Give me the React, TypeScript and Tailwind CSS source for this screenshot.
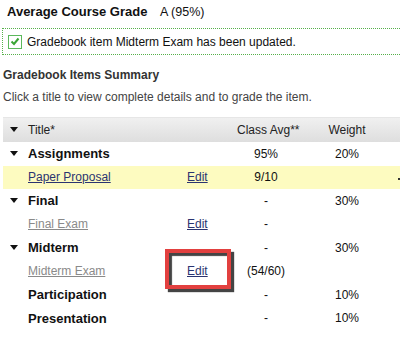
import React from "react";

type Row = {
  kind: "group" | "item";
  title: string;
  avg?: string;
  weight?: string;
  toggle?: boolean;
  edit?: boolean;
  muted?: boolean;
  highlight?: boolean;
  boxed?: boolean;
};

const rows: Row[] = [
  { kind: "group", title: "Assignments", avg: "95%", weight: "20%", toggle: true },
  { kind: "item", title: "Paper Proposal", avg: "9/10", edit: true, highlight: true },
  { kind: "group", title: "Final", avg: "-", weight: "30%", toggle: true },
  { kind: "item", title: "Final Exam", avg: "-", edit: true, muted: true },
  { kind: "group", title: "Midterm", avg: "-", weight: "30%", toggle: true },
  { kind: "item", title: "Midterm Exam", avg: "(54/60)", edit: true, muted: true, boxed: true },
  { kind: "group", title: "Participation", avg: "-", weight: "10%" },
  { kind: "group", title: "Presentation", avg: "-", weight: "10%" },
];

function Caret() {
  return (
    <svg width="8" height="6" viewBox="0 0 8 6" className="ml-[7px]">
      <path d="M0 0 L8 0 L4 5 Z" fill="#111" />
    </svg>
  );
}

function App(): JSX.Element {
  return (
    <div className="w-[400px] h-[341px] overflow-hidden bg-white text-[12px] text-[#111] font-['Liberation_Sans',Arial,sans-serif]">
      <div className="h-[24px] flex items-center pl-[7px]">
        <span className="font-bold text-[13px] w-[153px]">Average Course Grade</span>
        <span className="text-[12.5px]">A (95%)</span>
      </div>

      <div className="mt-[4px] ml-[2px] w-[420px] h-[27px] flex items-center border border-dotted border-[#56b04a] bg-white">
        <span className="ml-[5px] w-[14px] h-[14px] border border-[#5cb85c] bg-white flex items-center justify-center">
          <svg width="10" height="9" viewBox="0 0 10 9">
            <path d="M1.5 4.5 L4 7 L8.5 1.5" stroke="#3aa535" strokeWidth="2" fill="none" />
          </svg>
        </span>
        <span className="ml-[5px]">Gradebook item Midterm Exam has been updated.</span>
      </div>

      <div className="mt-[10px] h-[20px] flex items-center pl-[3px] font-bold text-[#333]">
        Gradebook Items Summary
      </div>
      <div className="mt-[2px] h-[20px] flex items-center pl-[3px] text-[#444]">
        Click a title to view complete details and to grade the item.
      </div>

      <div className="mt-[10px] ml-[3px]">
        <div className="h-[25px] flex items-center bg-gradient-to-b from-[#f0f0f0] to-[#dedede] border-t border-[#e6e6e6] text-[#222]">
          <div className="w-[25px]">
            <Caret />
          </div>
          <div className="w-[159px]">Title*</div>
          <div className="w-[50px]"></div>
          <div className="w-[58px] text-center whitespace-nowrap">Class Avg**</div>
          <div className="w-[104px] text-center">Weight</div>
        </div>

        {rows.map((r) => (
          <div
            key={r.title}
            className={
              "h-[23.5px] flex items-center relative " + (r.highlight ? "bg-[#fdfbc0]" : "")
            }
          >
            <div className="w-[25px]">{r.toggle && <Caret />}</div>
            <div className="w-[159px]">
              {r.kind === "group" ? (
                <span className="font-bold text-[13px] text-[#111]">{r.title}</span>
              ) : (
                <span
                  className={
                    "underline " + (r.muted ? "text-[#8a8a8a]" : "text-[#2b3470]")
                  }
                >
                  {r.title}
                </span>
              )}
            </div>
            <div className="w-[50px] relative">
              {r.edit && <span className="underline text-[#2b3470]">Edit</span>}
              {r.boxed && (
                <div className="absolute left-[-22px] top-[-13px] w-[66px] h-[40px] border-[4px] border-[#e2403f] shadow-[3px_3px_1px_#444,inset_3px_3px_1px_#444]"></div>
              )}
            </div>
            <div className="w-[58px] text-center whitespace-nowrap">{r.avg}</div>
            <div className="w-[104px] text-center">{r.weight}</div>
            {r.highlight && (
              <span className="absolute right-[0px] top-[12px] w-[2px] h-[2px] bg-[#333]"></span>
            )}
          </div>
        ))}
      </div>
    </div>
  );
}

export default App;
